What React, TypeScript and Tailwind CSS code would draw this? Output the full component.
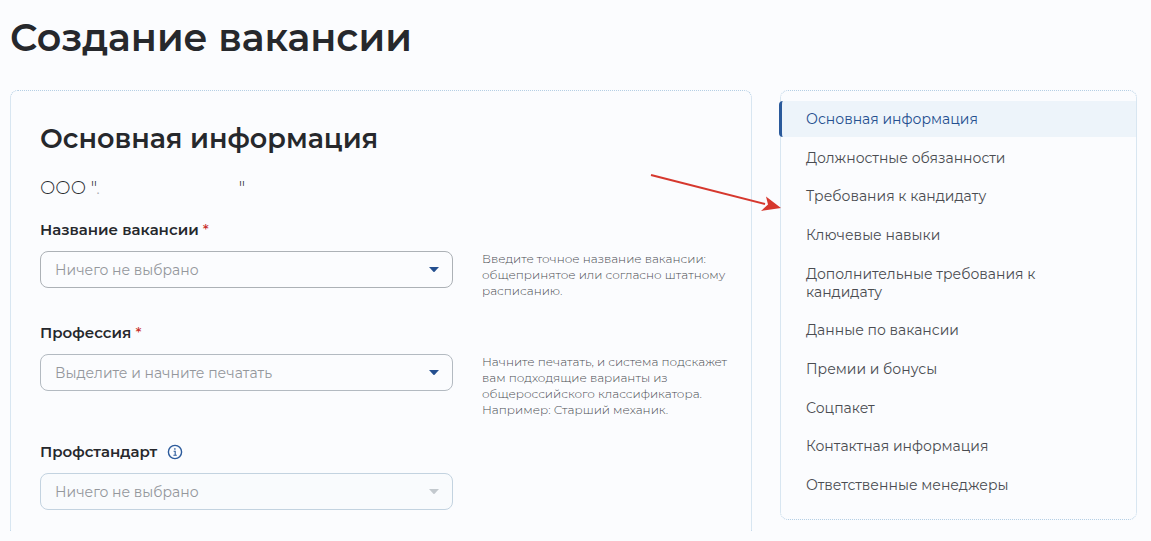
import React from "react";

interface FieldProps {
  id: string;
  label: string;
  hint?: string;
  required?: boolean;
  info?: boolean;
  disabled?: boolean;
  children: React.ReactNode;
}

const sections = [
  "Основная информация",
  "Должностные обязанности",
  "Требования к кандидату",
  "Ключевые навыки",
  "Дополнительные требования к кандидату",
  "Данные по вакансии",
  "Премии и бонусы",
  "Соцпакет",
  "Контактная информация",
  "Ответственные менеджеры",
];

const InfoIcon: React.FC = () => (
  <svg viewBox="0 0 16 16" className="h-4 w-4" fill="none" stroke="#2b5a9b" aria-hidden="true">
    <circle cx="8" cy="8" r="6.6" strokeWidth="1.4" />
    <path d="M6.6 7.2h1.6v4M6.4 11.2h3.4" strokeWidth="1.1" />
    <circle cx="7.9" cy="4.9" r="0.5" fill="#2b5a9b" strokeWidth="0.6" />
  </svg>
);

const Field: React.FC<FieldProps> = ({ id, label, hint, required, info, disabled, children }) => (
  <div>
    <div className="flex h-5 items-center gap-[10px]">
      <label htmlFor={id} className="text-[15px] leading-5 font-semibold text-[#26282c]">
        {label}
        {required && <span className="font-medium text-[#c9302c]"> *</span>}
      </label>
      {info && (
        <button type="button" aria-label="Подсказка">
          <InfoIcon />
        </button>
      )}
    </div>
    <div className="mt-[11px] grid grid-cols-[1fr_255px] items-start gap-[29px]">
      <div className="relative">
        {children}
        <svg
          viewBox="0 0 10 5"
          className={`pointer-events-none absolute top-4 right-[14px] h-[5px] w-[10px] ${disabled ? "fill-[#c3c9ce]" : "fill-[#244f8f]"}`}
          aria-hidden="true"
        >
          <path d="M0 0h10L5.6 4.7q-.6.5-1.2 0z" />
        </svg>
      </div>
      {hint && <p className="text-xs leading-4 font-light text-[#4c4e54]">{hint}</p>}
    </div>
  </div>
);

const App: React.FC = () => {
  return (
    <div className="bg-[#fbfcfe] pr-[14px] pb-[10px] pl-[10px] font-['Montserrat','Inter',sans-serif] text-[#26282c]">
      <h1 className="pt-[14px] text-[38px] leading-[48px] font-semibold">Создание вакансии</h1>

      <div className="mt-7 grid grid-cols-[1fr_357px] items-start gap-7">
        <main className="rounded-t-lg border border-b-0 border-dotted border-[#b5cfe4] pt-8 pr-[14px] pb-[21px] pl-[29px]">
          <h2 className="text-[27px] leading-8 font-semibold">Основная информация</h2>
          <p className="mt-[22px] flex gap-[139px] text-lg leading-[22px] font-light">
            <span>
              ООО "<span className="text-[#a9abb0]">.</span>
            </span>
            <span>"</span>
          </p>

          <form className="mt-[21px] flex flex-col gap-6">
            <Field
              id="vacancy"
              label="Название вакансии"
              required
              hint="Введите точное название вакансии: общепринятое или согласно штатному расписанию."
            >
              <select
                id="vacancy"
                className="h-[37px] w-full appearance-none rounded-lg border border-[#acb1b6] bg-transparent px-[14px] text-sm text-[#94979c]"
              >
                <option>Ничего не выбрано</option>
              </select>
            </Field>
            <Field
              id="profession"
              label="Профессия"
              required
              hint="Начните печатать, и система подскажет вам подходящие варианты из общероссийского классификатора. Например: Старший механик."
            >
              <input
                id="profession"
                type="text"
                placeholder="Выделите и начните печатать"
                className="h-[37px] w-full rounded-lg border border-[#b3bac1] bg-transparent px-[14px] text-sm placeholder:text-[#94979c]"
              />
            </Field>
            <Field id="standard" label="Профстандарт" info disabled>
              <select
                id="standard"
                disabled
                className="h-[37px] w-full appearance-none rounded-lg border border-[#c3d3e0] bg-[#f9fbfd] px-[14px] text-sm text-[#94979c] opacity-100"
              >
                <option>Ничего не выбрано</option>
              </select>
            </Field>
          </form>
        </main>

        <aside className="relative">
          <nav className="flex min-h-[430px] flex-col rounded-lg border border-dotted border-[#b5cfe4] pt-[10px] pb-4">
            <ul className="flex flex-1 flex-col justify-between">
              {sections.map((title, index) => (
                <li key={title}>
                  <a
                    href={`#section-${index + 1}`}
                    className={
                      index === 0
                        ? "-ml-0.5 block rounded-l-sm border-l-[3px] border-[#2b5a9b] bg-[#edf4fa] py-[9px] pr-20 pl-6 text-sm leading-[18px] text-[#244f8f]"
                        : "block py-[9px] pr-20 pl-[25px] text-sm leading-[18px] text-[#4a4c51]"
                    }
                  >
                    {title}
                  </a>
                </li>
              ))}
            </ul>
          </nav>
          {/* pointer to the section menu */}
          <svg
            viewBox="0 0 132 40"
            className="pointer-events-none absolute top-[83px] -left-[130px] h-10 w-[132px]"
            aria-hidden="true"
          >
            <path d="M1 2 115 31" stroke="#d6382e" strokeWidth="2" fill="none" />
            <path d="M131 35 116 23.500 118 31.500 111 38z" fill="#d6382e" />
          </svg>
        </aside>
      </div>
    </div>
  );
};

export default App;
